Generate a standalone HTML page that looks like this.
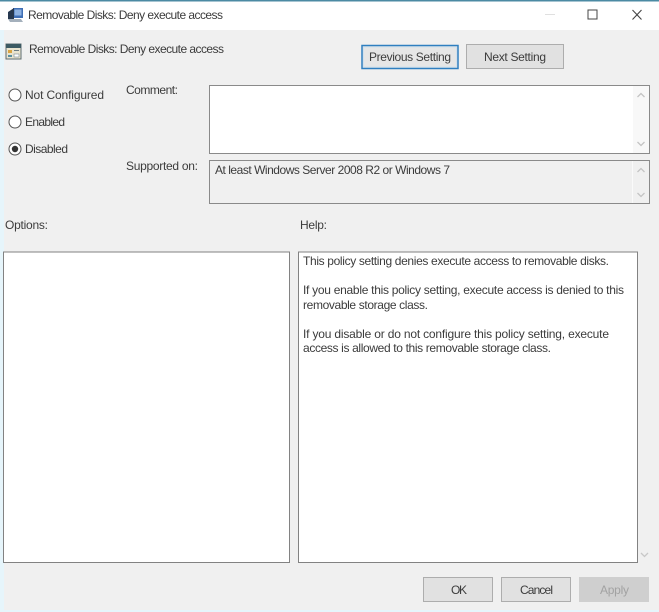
<!DOCTYPE html>
<html><head><meta charset="utf-8"><style>
html,body{margin:0;padding:0;width:659px;height:612px;overflow:hidden;background:#f0f0f0}
svg{display:block;filter:blur(.3px)}
text{font-family:"Liberation Sans",sans-serif;font-size:12px;fill:#3c3c3c}
</style></head><body>
<svg width="659" height="612" viewBox="0 0 659 612" xmlns="http://www.w3.org/2000/svg">
<rect width="659" height="612" fill="#f0f0f0"/>
<rect x="0" y="0" width="4" height="612" fill="#e6f5fb"/>
<rect x="0" y="610" width="659" height="2" fill="#e6f5fb"/>
<rect x="0" y="1" width="659" height="29" fill="#fff"/>
<rect x="0" y="0" width="659" height="1.500" fill="#4b8aa3"/>
<!-- title icon -->
<path d="M13 8h10v10h-10z" fill="#3f6fb5"/><path d="M14.500 9.500h7v6h-7z" fill="#8db2e2"/>
<path d="M8 12l6-4v11l-6 0z" fill="#26384f"/>
<path d="M8 19h13l2 3H10z" fill="#a4b0bc"/>
<text x="28" y="19" textLength="195">Removable Disks: Deny execute access</text>
<!-- window controls -->
<rect x="545" y="14" width="10" height="1" fill="#e0e0e0"/>
<rect x="588" y="10" width="9" height="9" fill="none" stroke="#444" stroke-width="1"/>
<path d="M632.500 10l9 9.500M641.500 10l-9 9.500" stroke="#444" stroke-width="1.100" fill="none"/>
<!-- header icon -->
<rect x="6" y="44" width="15" height="15" fill="#e9e4cf" stroke="#5d6b70"/>
<rect x="6" y="44" width="15" height="4" fill="#3c5a63"/>
<rect x="8" y="50" width="4" height="3" fill="#d9a441"/>
<rect x="14" y="50" width="5" height="1" fill="#6a7a80"/>
<rect x="8" y="55" width="4" height="2" fill="#5a8f9f"/>
<rect x="14" y="54" width="5" height="3" fill="#fff" stroke="#7b8a90" stroke-width=".6"/>
<text x="29" y="53" textLength="195">Removable Disks: Deny execute access</text>
<!-- top buttons -->
<rect x="362" y="45.500" width="96" height="23" fill="#e6e6e6" stroke="#2f7fc0" stroke-width="1.500"/>
<rect x="363.500" y="47" width="93" height="20" fill="none" stroke="#cfe0ee" stroke-width=".8"/>
<text x="369" y="61" textLength="82">Previous Setting</text>
<rect x="466.500" y="44.500" width="97" height="24" fill="#e1e1e1" stroke="#adadad"/>
<text x="484" y="61" textLength="62">Next Setting</text>
<!-- radios -->
<circle cx="15" cy="95" r="6" fill="#fff" stroke="#555" stroke-width="1"/>
<text x="25" y="99" textLength="79">Not Configured</text>
<circle cx="15" cy="122" r="6" fill="#fff" stroke="#555" stroke-width="1"/>
<text x="25" y="126" textLength="40">Enabled</text>
<circle cx="15" cy="149" r="6" fill="#fff" stroke="#555" stroke-width="1"/>
<circle cx="15" cy="149" r="3.200" fill="#333"/>
<text x="25" y="153" textLength="43">Disabled</text>
<!-- labels -->
<text x="126" y="94" textLength="52">Comment:</text>
<text x="126" y="170" textLength="72">Supported on:</text>
<text x="5" y="229" textLength="43">Options:</text>
<text x="300" y="229" textLength="27">Help:</text>
<!-- comment box -->
<rect x="209.500" y="85.500" width="440" height="68" fill="#fff" stroke="#8a8a8a"/>
<rect x="633" y="86" width="16" height="67" fill="#f8f8f8"/>
<path d="M637.500 97l3.500-3.500 3.500 3.500" fill="none" stroke="#c4c4c4" stroke-width="1.300"/>
<path d="M637.500 142l3.500 3.500 3.500-3.500" fill="none" stroke="#c4c4c4" stroke-width="1.300"/>
<!-- supported box -->
<rect x="209.500" y="160.500" width="440" height="43" fill="#f0f0f0" stroke="#8a8a8a"/>
<rect x="632" y="161" width="1" height="42" fill="#fafafa"/>
<path d="M637.500 172l3.500-3.500 3.500 3.500" fill="none" stroke="#c4c4c4" stroke-width="1.300"/>
<path d="M637.500 193l3.500 3.500 3.500-3.500" fill="none" stroke="#c4c4c4" stroke-width="1.300"/>
<text x="215" y="174" textLength="235">At least Windows Server 2008 R2 or Windows 7</text>
<!-- options/help -->
<rect x="3.500" y="252" width="286" height="310.500" fill="#fff" stroke="#828282"/>
<rect x="298.500" y="252" width="339" height="310.500" fill="#fff" stroke="#828282"/>
<text x="303" y="265" textLength="306">This policy setting denies execute access to removable disks.</text>
<text x="303" y="294" textLength="321">If you enable this policy setting, execute access is denied to this</text>
<text x="303" y="309" textLength="125">removable storage class.</text>
<text x="303" y="338" textLength="306">If you disable or do not configure this policy setting, execute</text>
<text x="303" y="352" textLength="248">access is allowed to this removable storage class.</text>
<path d="M641 553l3.500 3.500 3.500-3.500" fill="none" stroke="#c8c8c8" stroke-width="1.300"/>
<!-- bottom buttons -->
<rect x="423.500" y="577.500" width="69" height="24" fill="#e1e1e1" stroke="#adadad"/>
<text x="451" y="594" textLength="16">OK</text>
<rect x="501.500" y="577.500" width="69" height="24" fill="#e1e1e1" stroke="#adadad"/>
<text x="520" y="594" textLength="33">Cancel</text>
<rect x="579" y="577" width="70" height="25" fill="#cfcfcf"/>
<text x="600" y="594" textLength="29" style="fill:#a2a2a2">Apply</text>
</svg>
</body></html>
